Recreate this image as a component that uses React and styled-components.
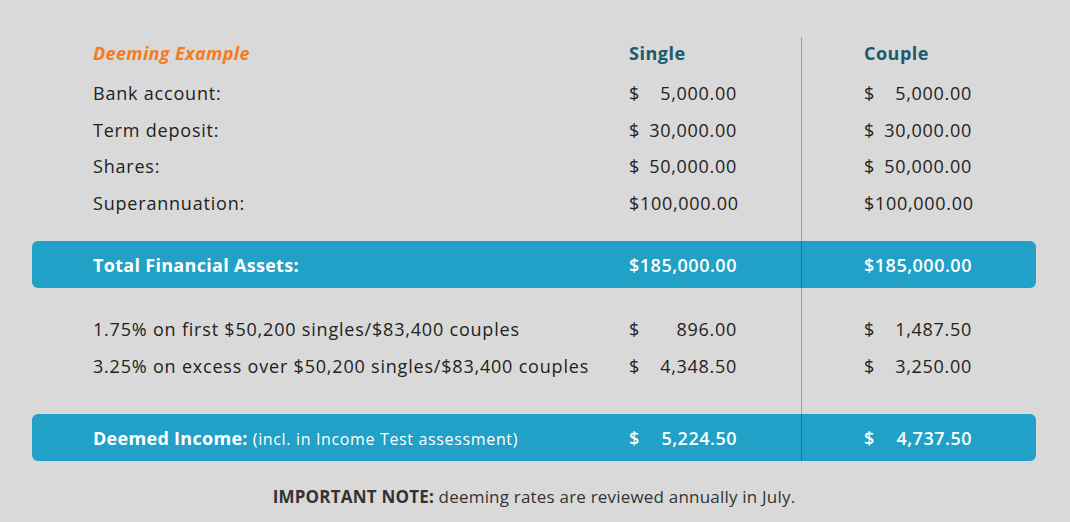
import styled, { createGlobalStyle } from "styled-components";

const GlobalStyle = createGlobalStyle`
  body {
    margin: 0;
    background: #d9d9d9;
    font-family: "Open Sans", "Liberation Sans", sans-serif;
    color: #222;
  }
`

const Page = styled.div`
  width: 1070px;
  height: 522px;
  padding: 37px 0 0 32px;
  box-sizing: border-box;
`

const Table = styled.div`
  position: relative;
  width: 1004px;
`

const Divider = styled.div`
  position: absolute;
  left: 769px;
  top: 0;
  bottom: 0;
  width: 1px;
  background: rgba(0, 0, 0, 0.25);
`

const Row = styled.div`
  display: grid;
  grid-template-columns: 536px 108px 127px 108px;
  align-items: center;
  padding-left: 61px;
  height: ${p => p.$h || 36.5}px;
  margin-top: ${p => p.$mt || 0}px;
  font-size: 18px;
  letter-spacing: 0.7px;
`

const Bar = styled(Row)`
  background: #21a1c7;
  border-radius: 6px;
  color: #fff;
  font-weight: 600;
  letter-spacing: 0.5px;
`

const Heading = styled.div`
  font-size: 18px;
  font-weight: 700;
  letter-spacing: ${p => p.$orange ? 0.35 : 0.5}px;
  color: ${p => p.$orange ? "#f47b20" : "#1b5a6e"};
  font-style: ${p => p.$orange ? "italic" : "normal"};
  grid-column: ${p => p.$col || "auto"};
`

const Label = styled.div`
  font-weight: ${p => p.$bold ? 700 : 400};
  letter-spacing: ${p => p.$bold ? "0.3px" : "0.8px"};
`

const Small = styled.span`
  font-size: 16px;
  font-weight: 400;
  letter-spacing: 0.65px;
`

const Amount = styled.div`
  display: flex;
  justify-content: space-between;
  grid-column: ${p => p.$col || "auto"};
`

const Note = styled.div`
  margin-top: 24px;
  width: 1004px;
  text-align: center;
  font-size: 17px;
  letter-spacing: 0.2px;
  line-height: 24px;
  color: #333;
  b { font-weight: 700; }
`

const Money = ({col, sign = "$", value}) => (
  <Amount $col={col}>
    <span>{sign}</span>
    <span>{value}</span>
  </Amount>
)

const assets = [
  ["Bank account:", "5,000.00", "5,000.00"],
  ["Term deposit:", "30,000.00", "30,000.00"],
  ["Shares:", "50,000.00", "50,000.00"],
  ["Superannuation:", "$100,000.00", "$100,000.00"],
]

const income = [
  ["1.75% on first $50,200 singles/$83,400 couples", "896.00", "1,487.50"],
  ["3.25% on excess over $50,200 singles/$83,400 couples", "4,348.50", "3,250.00"],
]

const cell = (v, col) => v.startsWith("$")
  ? <Amount $col={col}><span>{v}</span></Amount>
  : <Money col={col} value={v} />

export default function App() {
  return (
    <>
      <GlobalStyle />
      <Page>
        <Table>
          <Divider />
          <Row $h={32}>
            <Heading $orange>Deeming Example</Heading>
            <Heading>Single</Heading>
            <Heading $col={4}>Couple</Heading>
          </Row>
          {assets.map(([label, s, c], i) => (
            <Row key={label} $mt={i === 0 ? 6 : 0}>
              <Label>{label}</Label>
              {cell(s, 2)}
              {cell(c, 4)}
            </Row>
          ))}
          <Bar $h={47} $mt={20}>
            <Label $bold>Total Financial Assets:</Label>
            <Amount $col={2}><span>$185,000.00</span></Amount>
            <Amount $col={4}><span>$185,000.00</span></Amount>
          </Bar>
          {income.map(([label, s, c], i) => (
            <Row key={label} $mt={i === 0 ? 22.75 : 0}>
              <Label>{label}</Label>
              {cell(s, 2)}
              {cell(c, 4)}
            </Row>
          ))}
          <Bar $h={47} $mt={30.5}>
            <Label $bold>Deemed Income: <Small>(incl. in Income Test assessment)</Small></Label>
            <Money col={2} value="5,224.50" />
            <Money col={4} value="4,737.50" />
          </Bar>
        </Table>
        <Note><b>IMPORTANT NOTE:</b> deeming rates are reviewed annually in July.</Note>
      </Page>
    </>
  )
}
